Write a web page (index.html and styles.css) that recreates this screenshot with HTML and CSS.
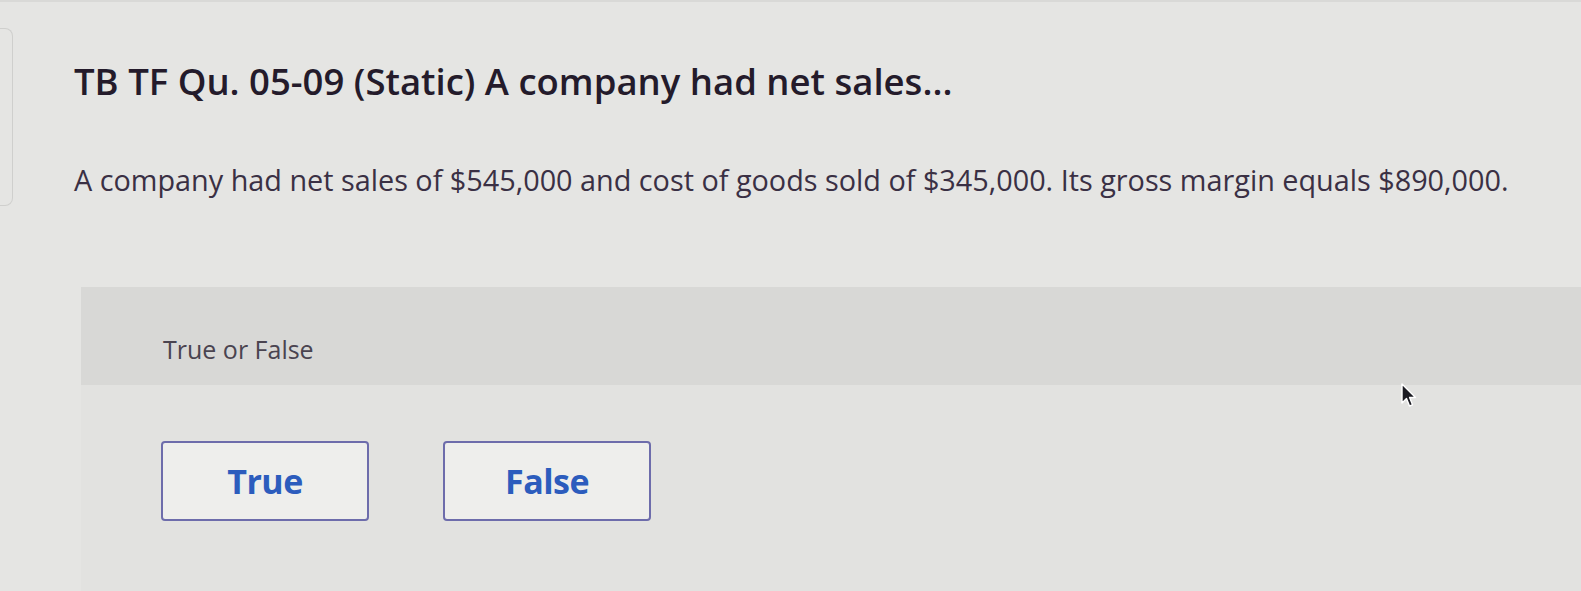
FILE: index.html
```html
<!DOCTYPE html>
<html lang="en">
<head>
    <meta charset="UTF-8">
    <meta name="viewport" content="width=device-width, initial-scale=1.0">
    <title>TB TF Qu. 05-09</title>
    <link rel="stylesheet" href="styles.css">
</head>
<body>
    <div class="question">
        <div class="prev-card"></div>
        <div class="question-text">
            <h2>TB TF Qu. 05-09 (Static) A company had net sales...</h2>
            <p>A company had net sales of $545,000 and cost of goods sold of $345,000. Its gross margin equals $890,000.</p>
        </div>
    </div>

    <div class="answer-panel">
        <div class="answer-head">True or False</div>
        <div class="answer-body">
            <button class="choice">True</button>
            <button class="choice">False</button>
        </div>
    </div>

    <svg class="pointer" width="18" height="26" viewBox="0 0 18 26">
        <path d="M2 1 L2 20 L6.5 15.5 L9.5 23 L12.5 21.8 L9.6 14.5 L15.5 14.5 Z" fill="#1b1b22" stroke="#fff" stroke-width="1.4" stroke-linejoin="round"/>
    </svg>
</body>
</html>
```

FILE: styles.css
```css
body {
    margin: 0px;
    font-family: "Open Sans", Lato, sans-serif;
    background-color: #e5e5e3;
    height: 100vh;
    overflow: hidden;
    border-top: 2px solid #d9d9d7;
    box-sizing: border-box;
    display: flex;
    flex-direction: column;
}

.question {
    display: flex;
    height: 285px;
    flex-shrink: 0;
}

.prev-card {
    width: 12px;
    height: 176px;
    margin-top: 26px;
    border: 1.5px solid #cfcfcd;
    border-left: none;
    border-radius: 0 8px 8px 0;
}

.question-text {
    padding-left: 61px;
}

.question-text h2 {
    margin: 0;
    padding-top: 57px;
    font-size: 36.5px;
    font-weight: 600;
    color: #241b2b;
    line-height: 44px;
}

.question-text p {
    margin: 0;
    padding-top: 59px;
    font-size: 28.8px;
    color: #3a3044;
    line-height: 36px;
}

.answer-panel {
    margin-left: 81px;
    flex: 1;
    background-color: #e2e2e0;
}

.answer-head {
    background-color: #d8d8d6;
    height: 98px;
    box-sizing: border-box;
    padding: 45px 0 0 82px;
    font-size: 25px;
    color: #4a4450;
}

.answer-body {
    display: flex;
    gap: 74px;
    padding: 56px 0 0 80px;
}

.choice {
    width: 208px;
    height: 80px;
    background-color: #eeeeec;
    border: 2px solid #6d6cab;
    border-radius: 4px;
    font-family: "Open Sans", Lato, sans-serif;
    font-size: 34px;
    font-weight: bold;
    color: #2c5cbd;
    padding: 0;
    letter-spacing: -0.5px;
}

.pointer {
    position: absolute;
    left: 1400px;
    top: 383px;
}
```
